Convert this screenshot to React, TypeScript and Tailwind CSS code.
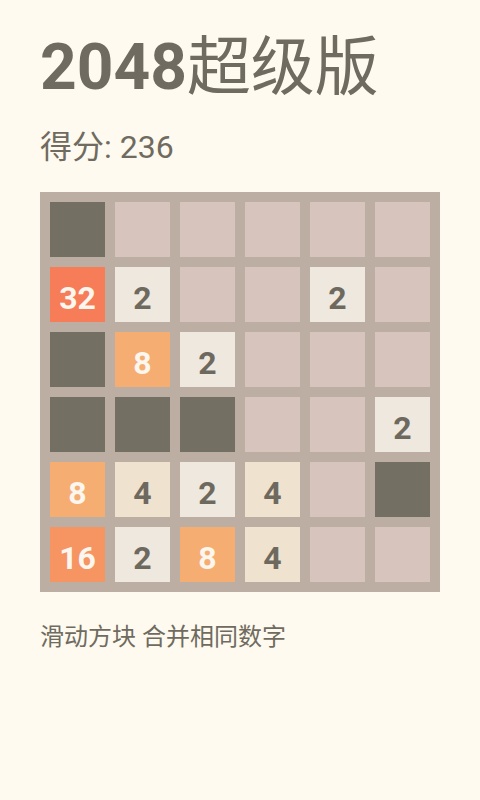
import React from 'react'

type Cell = number | 'X' | null

const board: Cell[][] = [
  ['X', null, null, null, null, null],
  [32, 2, null, null, 2, null],
  ['X', 8, 2, null, null, null],
  ['X', 'X', 'X', null, null, 2],
  [8, 4, 2, 4, null, 'X'],
  [16, 2, 8, 4, null, null],
]

function tileClass(v: Cell) {
  if (v === 'X') return 'bg-[#736f63]'
  if (v === null) return 'bg-[#d6c4bd]'
  switch (v) {
    case 2:
      return 'bg-[#eee8df] text-[#6e695f]'
    case 4:
      return 'bg-[#efe3cf] text-[#6e695f]'
    case 8:
      return 'bg-[#f5ad72] text-[#fbf6ee]'
    case 16:
      return 'bg-[#f69462] text-[#fbf6ee]'
    case 32:
      return 'bg-[#f67d58] text-[#fbf6ee]'
    default:
      return 'bg-[#edcf72] text-[#fbf6ee]'
  }
}

function Tile({ value }: { value: Cell }) {
  return (
    <div
      className={`w-[55px] h-[55px] flex items-center justify-center pt-[7px] text-[32px] font-bold leading-none ${tileClass(value)}`}
    >
      {typeof value === 'number' ? value : null}
    </div>
  )
}

export default function App() {
  return (
    <div
      className="w-[480px] h-[800px] bg-[#fefaef] text-[#6f6b60] px-[40px] pt-[30px] flex flex-col"
      style={{ fontFamily: 'Roboto, "Noto Sans CJK SC", sans-serif' }}
    >
      {/* title */}
      <h1 className="text-[64px] leading-[76px] whitespace-nowrap">
        <span className="font-bold">2048</span>
        <span className="font-normal">超级版</span>
      </h1>

      <div className="mt-[22px] text-[32px] leading-[38px]">得分: 236</div>

      {/* board */}
      <div className="mt-[26px] w-[400px] h-[400px] bg-[#bcaea3] p-[10px] grid grid-cols-6 gap-[10px]">
        {board.flatMap((row, r) =>
          row.map((v, c) => <Tile key={`${r}-${c}`} value={v} />)
        )}
      </div>

      <p className="mt-[29px] text-[24px] leading-[32px]">滑动方块 合并相同数字</p>
    </div>
  )
}
